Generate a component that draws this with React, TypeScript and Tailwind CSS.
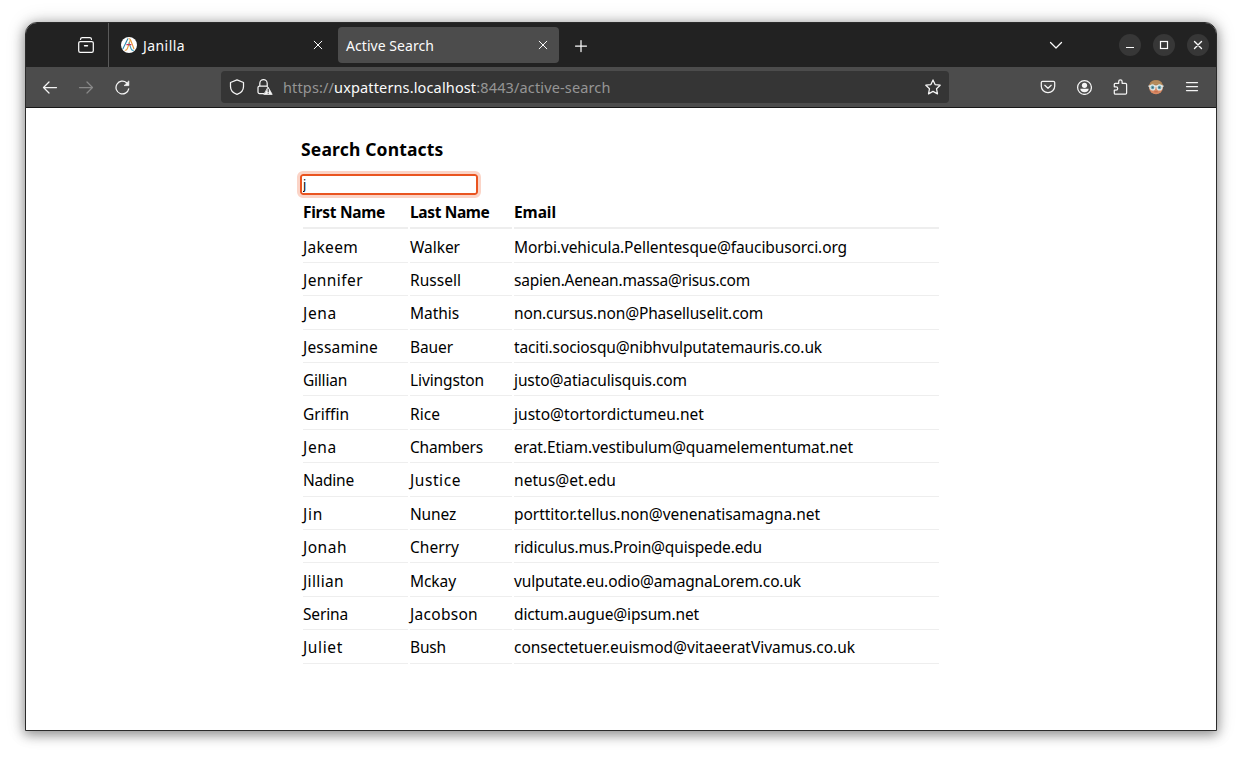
import { useLayoutEffect, useRef, useState, type ReactNode } from "react";

type FitProps = { width: number; className?: string; children: ReactNode };

/** One line of text whose letter spacing is tuned so that it takes `width` pixels. */
function Fit({ width, className = "", children }: FitProps) {
  const ref = useRef<HTMLSpanElement>(null);
  const [spacing, setSpacing] = useState(0);
  useLayoutEffect(() => {
    const el = ref.current;
    if (!el) return;
    const count = (el.textContent ?? "").length;
    setSpacing((width - el.getBoundingClientRect().width) / count);
  }, [width]);
  return (
    <span ref={ref} className={`inline-block whitespace-nowrap ${className}`} style={{ letterSpacing: spacing }}>
      {children}
    </span>
  );
}

type Cell = [text: string, width: number];

const contacts: [Cell, Cell, Cell][] = [
  [["Jakeem", 55], ["Walker", 50], ["Morbi.vehicula.Pellentesque@faucibusorci.org", 333]],
  [["Jennifer", 60], ["Russell", 51], ["sapien.Aenean.massa@risus.com", 236]],
  [["Jena", 34], ["Mathis", 49], ["non.cursus.non@Phaselluselit.com", 249]],
  [["Jessamine", 75], ["Bauer", 43], ["taciti.sociosqu@nibhvulputatemauris.co.uk", 308]],
  [["Gillian", 44], ["Livingston", 74], ["justo@atiaculisquis.com", 173]],
  [["Griffin", 46], ["Rice", 30], ["justo@tortordictumeu.net", 190]],
  [["Jena", 34], ["Chambers", 73], ["erat.Etiam.vestibulum@quamelementumat.net", 339]],
  [["Nadine", 51], ["Justice", 51], ["netus@et.edu", 102]],
  [["Jin", 20], ["Nunez", 46], ["porttitor.tellus.non@venenatisamagna.net", 306]],
  [["Jonah", 44], ["Cherry", 49], ["ridiculus.mus.Proin@quispede.edu", 248]],
  [["Jillian", 41], ["Mckay", 46], ["vulputate.eu.odio@amagnaLorem.co.uk", 287]],
  [["Serina", 45], ["Jacobson", 68], ["dictum.augue@ipsum.net", 185]],
  [["Juliet", 40], ["Bush", 36], ["consectetuer.euismod@vitaeeratVivamus.co.uk", 341]],
];

const headings: Cell[] = [["First Name", 82], ["Last Name", 79.5], ["Email", 42]];

type IconProps = { className?: string; children: ReactNode };

function Icon({ className = "", children }: IconProps) {
  return (
    <svg
      viewBox="0 0 16 16"
      className={`block size-4 shrink-0 ${className}`}
      fill="none"
      stroke="currentColor"
      strokeWidth="1.25"
      strokeLinecap="round"
      strokeLinejoin="round"
    >
      {children}
    </svg>
  );
}

function TabClose() {
  return (
    <Icon>
      <path d="M4.200 4.200l7.600 7.600M11.800 4.200l-7.600 7.600" strokeWidth="1" />
    </Icon>
  );
}

function JanillaLogo() {
  return (
    <svg viewBox="0 0 16 16" className="block size-4 shrink-0" fill="none" strokeWidth="1.1">
      <circle cx="8" cy="8" r="8" fill="#fff" />
      <path d="M1.800 12L7 1.600" stroke="#2b87ad" />
      <path d="M3.800 13.200c1.400.4 2.200-.6 2.700-2L9.400 2.800" stroke="#e8a13c" />
      <path d="M7.600 1.800c1.200-.4 1.700.3 2.100 1.400L13 12" stroke="#e8963a" />
      <path d="M7.800 5.500l2.300 6.200c.5 1.400 1.300 2 2.600 1.600" stroke="#3fa0bf" />
      <path d="M5.400 7.600h5" stroke="#c8375c" strokeWidth="1.300" />
    </svg>
  );
}

function Avatar() {
  return (
    <svg viewBox="0 0 16 16" className="block size-4 shrink-0">
      <circle cx="8" cy="8.2" r="7" fill="#d98a64" />
      <path d="M1.2 6.6C1.6 3 4.4.9 8 .9s6.400 2.100 6.800 5.700z" fill="#ab8355" />
      <path d="M4 2.800h8M3 4.300h10" stroke="#c49a68" strokeWidth=".6" />
      <path d="M.4 7.200h15.200" stroke="#e9f5f5" strokeWidth="1.200" />
      <circle cx="4.500" cy="8.400" r="2.500" fill="#7fa9b2" stroke="#dcebec" strokeWidth="1.200" />
      <circle cx="11.500" cy="8.400" r="2.500" fill="#7fa9b2" stroke="#dcebec" strokeWidth="1.200" />
      <circle cx="4.700" cy="8.500" r=".9" fill="#2f6f82" />
      <circle cx="11.300" cy="8.500" r=".9" fill="#2f6f82" />
      <path d="M6.300 12.800h3.400" stroke="#b95f43" strokeWidth=".8" />
    </svg>
  );
}

function TitleBar() {
  return (
    <div className="flex h-11 bg-[#222222] text-[#fbfbfb]">
      <div className="flex w-[83px] items-center justify-end border-r border-[#5a5a5a] pr-[14px]">
        <Icon>
          <path d="M2.500 2.400C2.600 1.200 3.300.7 4.300.7h7.400c1 0 1.700.5 1.800 1.700" />
          <rect x=".7" y="4.500" width="14.600" height="10.800" rx="1.600" />
          <path d="M6.500 8.700h3" strokeWidth="1.400" />
        </Icon>
      </div>
      <div className="flex w-[229px] items-center pl-3 pr-3">
        <JanillaLogo />
        <Fit width={42} className="ml-1.5 text-[14px]">Janilla</Fit>
        <div className="ml-auto">
          <TabClose />
        </div>
      </div>
      <div className="mt-1 flex h-9 w-[221px] items-center rounded bg-[#4c4c4c] pl-2 pr-2">
        <Fit width={88} className="text-[14px]">Active Search</Fit>
        <div className="ml-auto">
          <TabClose />
        </div>
      </div>
      <div className="flex items-center pl-[13.5px] pt-px">
        <Icon>
          <path d="M8 2.500v11M2.500 8h11" />
        </Icon>
      </div>
      <div className="ml-auto flex items-center pr-[7px]">
        <Icon className="mr-[55px]">
          <path d="M2.500 5.500L8 11l5.500-5.500" />
        </Icon>
        <div className="flex gap-3">
          <div className="flex size-[22px] items-center justify-center rounded-full bg-[#373737]">
            <Icon>
              <path d="M4 10.500h8" strokeLinecap="butt" strokeWidth="1" />
            </Icon>
          </div>
          <div className="flex size-[22px] items-center justify-center rounded-full bg-[#373737]">
            <Icon>
              <rect x="4.500" y="4.500" width="7" height="7" strokeLinejoin="miter" strokeWidth="1.200" />
            </Icon>
          </div>
          <div className="flex size-[22px] items-center justify-center rounded-full bg-[#373737]">
            <Icon>
              <path d="M4.500 4.500l7 7M11.500 4.500l-7 7" strokeWidth="1.400" />
            </Icon>
          </div>
        </div>
      </div>
    </div>
  );
}

function ToolBar() {
  return (
    <div className="flex h-[41px] items-center border-b border-[#181818] bg-[#4c4c4c] px-4 text-[#f4f4f4]">
      <Icon>
        <path d="M14.500 8.500h-13M7 3L1.500 8.500 7 14" />
      </Icon>
      <Icon className="ml-5 text-[#888888]">
        <path d="M1.500 8.500h13M9 3L14.500 8.500 9 14" />
      </Icon>
      <Icon className="ml-5">
        <path d="M14.700 9.800A6.400 6.400 0 1 1 12.600 3.700l1.500 1.300" />
        <path d="M14.800 2.300v4.300h-4.300z" fill="currentColor" strokeWidth=".8" />
      </Icon>
      <div className="ml-[91px] flex h-8 w-[728px] items-center rounded bg-[#353535] px-2">
        <Icon>
          <path d="M8 .8L14.500 3.500v4C14.500 11.500 11.500 14.200 8 15.300 4.500 14.200 1.500 11.500 1.500 7.500v-4z" />
        </Icon>
        <Icon className="ml-3">
          <path d="M7 14.500H2.600C1.600 14.500 1 13.900 1 13V8.600C1 7.600 1.600 7 2.600 7H10.500M2.800 7V4.400a3.700 3.700 0 0 1 7.400 0V7.500" />
          <path d="M11.200 8.300L15.200 15.400H7.200z" fill="currentColor" strokeWidth=".8" />
          <path d="M11.200 10.400v2.300M11.200 14.200v.1" stroke="#353535" strokeWidth="1.100" />
        </Icon>
        <Fit width={327.5} className="ml-[10px] pt-0.5 text-[14.5px] text-[#959595]">
          https://<span className="text-[#fbfbfb]">uxpatterns.localhost</span>:8443/active-search
        </Fit>
        <Icon className="ml-auto">
          <path d="M8 .9l2.100 4.700 5.100.6-3.700 3.500 1 5.200L8 12.400l-4.500 2.500 1-5.200L.8 6.200l5.100-.6z" />
        </Icon>
      </div>
      <div className="ml-auto flex gap-5">
        <Icon>
          <path d="M2.600 2.300h10.800c.8 0 1.300.5 1.300 1.300v3.700a6.700 6.400 0 0 1-13.400 0V3.600c0-.8.5-1.300 1.300-1.300z" />
          <path d="M4.800 6.300L8 9.300l3.200-3" />
        </Icon>
        <Icon>
          <circle cx="8.500" cy="8.500" r="6.900" />
          <circle cx="8.500" cy="6.300" r="2.600" fill="currentColor" stroke="none" />
          <path d="M4.300 9.800h8.400c0 2-1.700 3.400-4.200 3.400s-4.200-1.400-4.200-3.400z" fill="currentColor" stroke="none" />
        </Icon>
        <Icon>
          <path d="M6.700 4.300V2.600a1.700 1.700 0 0 1 3.400 0v1.700h3.300c.8 0 1.200.4 1.200 1.200v8.500c0 .8-.4 1.200-1.200 1.200H3.300c-.7 0-1-.4-1-1v-3H4a1.700 1.700 0 0 0 0-3.400H2.300V5.300c0-.6.300-1 1-1z" />
        </Icon>
        <Avatar />
        <Icon>
          <path d="M2.500 3.500h11M2.500 7.500h11M2.500 11.500h11" />
        </Icon>
      </div>
    </div>
  );
}

function ContactTable() {
  return (
    <div className="ml-0.5 mt-[3px] w-[636px] text-[15.5px]">
      <div className="grid h-[31.5px] grid-cols-[105px_102px_425px] grid-rows-[31px] gap-x-0.5">
        {headings.map(([text, width]) => (
          <div key={text} className="border-b-2 border-[#eeeeee] font-bold leading-[29px]">
            <Fit width={width}>{text}</Fit>
          </div>
        ))}
      </div>
      {contacts.map((row) => (
        <div key={row[2][0]} className="grid h-[33.4px] grid-cols-[105px_102px_425px] grid-rows-[33.4px] gap-x-0.5">
          {row.map(([text, width]) => (
            <div key={text} className="border-b border-[#eeeeee] pt-[0.1px] leading-[35.4px]">
              <Fit width={width}>{text}</Fit>
            </div>
          ))}
        </div>
      ))}
    </div>
  );
}

export default function App() {
  const [query, setQuery] = useState("j");
  return (
    <div className="h-[759px] w-[1242px] overflow-hidden bg-white pl-[25px] pt-[22px] font-['Noto_Sans',sans-serif]">
      <div className="h-[709px] w-[1192px] overflow-hidden rounded-t-xl border border-[#2b2b2b] bg-white shadow-[0_3px_12px_1px_rgba(0,0,0,0.38),0_0_20px_rgba(0,0,0,0.15)]">
        <TitleBar />
        <ToolBar />
        <main className="ml-[275px] w-[640px] pt-[28px] text-black">
          <h3 className="h-[27px] text-[17.5px] font-bold leading-[27px]">
            <Fit width={142.5}>Search Contacts</Fit>
          </h3>
          <input
            value={query}
            onChange={(e) => setQuery(e.target.value)}
            className="-ml-px mt-[11px] block h-[21px] w-[178px] rounded-[3px] border-2 border-[#e95420] bg-white px-px text-[12.5px] leading-4 outline-[3px] outline-[#fbd4c7]"
          />
          <ContactTable />
        </main>
      </div>
    </div>
  );
}
